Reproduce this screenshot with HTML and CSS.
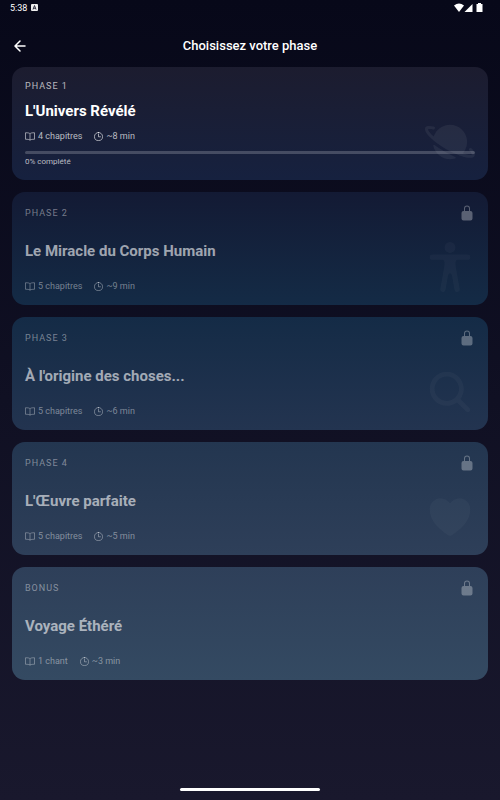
FILE: index.html
```html
<!DOCTYPE html>
<html lang="fr">
<head>
<meta charset="utf-8">
<meta name="viewport" content="width=device-width, initial-scale=1">
<title>Choisissez votre phase</title>
<link rel="stylesheet" href="styles.css">
</head>
<body>
<svg class="sprite" aria-hidden="true">
  <symbol id="book" viewBox="1 0 20 18"><path d="M11 3.500C9.500 1.800 7 1.500 2 1.500v13C7 14.500 9.500 15 11 16.500c1.500-1.500 4-2 9-2v-13C15 1.500 12.500 1.800 11 3.500zv13" fill="none" stroke="currentColor" stroke-width="1.500" stroke-linejoin="round"/></symbol>
  <symbol id="clock" viewBox="1 1 16 16"><path d="M9 1.800a7.200 7.200 0 1 0 0 14.400a7.200 7.200 0 1 0 0-14.400zM9 4.500v5h3.500" fill="none" stroke="currentColor" stroke-width="1.500" stroke-linecap="round" stroke-linejoin="round"/></symbol>
  <symbol id="lock" viewBox="0 0 512 512"><path fill="currentColor" d="M368 192h-16v-80a96 96 0 10-192 0v80h-16a64.070 64.070 0 00-64 64v176a64.070 64.070 0 0064 64h224a64.070 64.070 0 0064-64V256a64.070 64.070 0 00-64-64zm-48 0H192v-80a64 64 0 11128 0z"/></symbol>
</svg>

<div class="status">
  <span class="status-left">5:38
    <svg width="7" height="7" viewBox="0 0 14 14"><rect width="14" height="14" rx="2" fill="#eee"/><path d="M4 11l3-8 3 8M5 8.500h4" fill="none" stroke="#0a0a1e" stroke-width="1.600"/></svg>
  </span>
  <svg width="30" height="10" viewBox="0 0 30 10" fill="#fff"><path d="M0 2.500Q5-1.500 10 2.500L5 9z"/><path d="M18.500 1v8h-8z"/><path d="M24 0h3v1h1.500v8h-6V1H24z"/></svg>
</div>

<header class="header">
  <button class="back" type="button" aria-label="Retour">
    <svg width="12" height="12" viewBox="0 0 12 12"><path d="M6 1L1 6l5 5M1.500 6H11" fill="none" stroke="currentColor" stroke-width="1.500" stroke-linecap="round" stroke-linejoin="round"/></svg>
  </button>
  <h1>Choisissez votre phase</h1>
</header>

<main class="phases">
  <button class="card univers" type="button">
    <span class="top"><span class="label">PHASE 1</span></span>
    <span class="title">L'Univers Révélé</span>
    <span class="meta"><span class="item"><svg class="book"><use href="#book"/></svg>4 chapitres</span><span class="item"><svg class="clock"><use href="#clock"/></svg>~8 min</span></span>
    <span class="progress"><progress value="0" max="100" aria-label="Progression"></progress><span class="percent">0% complété</span></span>
    <svg class="art" viewBox="0 0 512 512"><path d="M96.850 286.620a8 8 0 00-12.530 8.250C102.070 373.280 172.300 432 256 432a175.310 175.310 0 0052.410-8 8 8 0 00.79-15 1120.560 1120.560 0 01-109.480-55.610 1126.240 1126.240 0 01-102.870-66.770z"/><path d="M492.720 339.510c-4.190-5.580-9.110-11.440-14.700-17.530a15.830 15.830 0 00-26.560 5.130l-.17.47a15.750 15.750 0 003.150 16.060c22.740 25 26.420 38.510 25.480 41.360-2 2.230-17.050 6.890-58.150-3.530q-8.830-2.240-19.320-5.460-6.760-2.080-13.790-4.490a176.760 176.760 0 0019.540-27.250l.52-.88A175.390 175.390 0 00432 256a178.870 178.870 0 00-1-19c-9.630-88.650-84.650-157-175-157a175.370 175.370 0 00-106.400 35.890 177.400 177.400 0 00-45.830 51.840l-.51.87a175.480 175.480 0 00-13.830 30.520q-5.590-4.870-10.790-9.670c-5.390-5-10.170-9.630-14.420-14-29.570-30.260-33.090-45.610-32.160-48.450 2.340-2.470 16.050-6.270 51.210 1.770a16 16 0 0015-5 15.800 15.800 0 00-8-26C63 91 16 84 4 106c-8 14-4 39 15.300 66.500C34 192 55 213 82 236C115 265 158 296 208 325C258 354 308 377 352 393C385 405 415 413 441 417C490 424 505 405 508 396C512 382 508 360 492.720 339.510z"/></svg>
  </button>

  <button class="card locked corps" type="button" disabled>
    <span class="top"><span class="label">PHASE 2</span><svg class="lock"><use href="#lock"/></svg></span>
    <span class="title">Le Miracle du Corps Humain</span>
    <span class="meta"><span class="item"><svg class="book"><use href="#book"/></svg>5 chapitres</span><span class="item"><svg class="clock"><use href="#clock"/></svg>~9 min</span></span>
    <svg class="art" viewBox="0 0 512 512"><circle cx="256" cy="56" r="56"/><path d="M437 128H75a27 27 0 000 54h101.880c6.910 0 15 3.090 19.580 15 5.350 13.830 2.730 40.540-.57 61.230l-4.320 24.450-34.720 197.160A27.430 27.430 0 00179 511.580a27.060 27.060 0 0031.420-22.290l23.910-136.800S242 320 256 320c14.230 0 21.740 32.490 21.740 32.490l23.920 136.920a27.240 27.240 0 1053.620-9.600L320.660 283l-4.440-24.800c-3.300-20.690-5.920-47.400-.57-61.230 4.560-11.880 12.910-15 19.260-15H437a27 27 0 000-54z"/></svg>
  </button>

  <button class="card locked origine" type="button" disabled>
    <span class="top"><span class="label">PHASE 3</span><svg class="lock"><use href="#lock"/></svg></span>
    <span class="title">À l'origine des choses...</span>
    <span class="meta"><span class="item"><svg class="book"><use href="#book"/></svg>5 chapitres</span><span class="item"><svg class="clock"><use href="#clock"/></svg>~6 min</span></span>
    <svg class="art" viewBox="0 0 512 512"><path d="M456.690 421.390L362.600 327.300a173.810 173.810 0 0034.840-104.580C397.440 126.380 319.060 48 222.720 48S48 126.380 48 222.720s78.380 174.720 174.720 174.720A173.810 173.810 0 00327.300 362.600l94.090 94.090a25 25 0 0035.300-35.300zM97.920 222.720a124.800 124.800 0 11124.800 124.800 124.950 124.950 0 01-124.800-124.800z"/></svg>
  </button>

  <button class="card locked oeuvre" type="button" disabled>
    <span class="top"><span class="label">PHASE 4</span><svg class="lock"><use href="#lock"/></svg></span>
    <span class="title">L'Œuvre parfaite</span>
    <span class="meta"><span class="item"><svg class="book"><use href="#book"/></svg>5 chapitres</span><span class="item"><svg class="clock"><use href="#clock"/></svg>~5 min</span></span>
    <svg class="art" viewBox="0 0 512 512"><path d="M256 448a32 32 0 01-18-5.570c-78.590-53.350-112.620-89.930-131.390-112.800-40-48.750-59.150-98.800-58.610-153C48.630 114.520 98.460 64 159.080 64c44.080 0 74.610 24.830 92.390 45.510a6 6 0 009.060 0C278.310 88.810 308.840 64 352.920 64c60.620 0 110.450 50.520 111.080 112.640.54 54.210-18.630 104.260-58.610 153-18.770 22.870-52.800 59.450-131.390 112.800A32 32 0 01256 448z"/></svg>
  </button>

  <button class="card locked voyage" type="button" disabled>
    <span class="top"><span class="label">BONUS</span><svg class="lock"><use href="#lock"/></svg></span>
    <span class="title">Voyage Éthéré</span>
    <span class="meta"><span class="item"><svg class="book"><use href="#book"/></svg>1 chant</span><span class="item"><svg class="clock"><use href="#clock"/></svg>~3 min</span></span>
  </button>
</main>

<div class="home"></div>
</body>
</html>
```
FILE: styles.css
```css
* { box-sizing: border-box; }

body {
  margin: 0;
  min-height: 100vh;
  display: flex;
  flex-direction: column;
  background: linear-gradient(#070819, #19182d);
  color: #fff;
  font-family: Roboto, "Liberation Sans", sans-serif;
}

button {
  border: 0;
  background: none;
  color: inherit;
  font: inherit;
  text-align: left;
}

svg { display: block; flex: none; }

.sprite { position: absolute; width: 0; height: 0; }

.status {
  display: flex;
  align-items: center;
  justify-content: space-between;
  height: 15px;
  padding: 0 16px 0 10px;
  font-size: 9px;
  line-height: 12px;
}

.status-left { display: flex; align-items: center; gap: 4px; }

.header {
  display: grid;
  grid-template-columns: 16px 1fr 16px;
  align-items: center;
  margin-top: 21px;
  padding: 0 12px;
  height: 20px;
}

.back { padding: 2px; }

h1 {
  margin: 0;
  text-align: center;
  font-size: 13px;
  line-height: 20px;
  font-weight: 500;
}

.phases {
  display: flex;
  flex-direction: column;
  gap: 12px;
  padding: 11px 12px;
}

.card {
  position: relative;
  display: flex;
  flex-direction: column;
  justify-content: space-between;
  min-height: 113px;
  padding: 13px;
  border-radius: 13px;
}

.univers { background: linear-gradient(#1c1c2f, #16213f); }
.corps { background: linear-gradient(#131a34, #142b46); }
.origine { background: linear-gradient(#142b46, #233450); }
.oeuvre { background: linear-gradient(#233650, #2e3f59); }
.voyage { background: linear-gradient(#2e3f59, #344a62); }

.top { display: flex; justify-content: space-between; align-items: center; }

.label {
  font-size: 9px;
  line-height: 12px;
  letter-spacing: 1px;
  color: rgba(255, 255, 255, 0.7);
}

.lock { width: 16px; height: 16px; color: rgba(255, 255, 255, 0.3); }

.title { font-size: 15px; line-height: 20px; font-weight: 700; }

.meta {
  display: flex;
  gap: 12px;
  font-size: 9px;
  line-height: 12px;
  color: rgba(255, 255, 255, 0.7);
}

.item { display: flex; align-items: center; gap: 3px; }
.book { width: 10px; height: 9px; }
.clock { width: 9px; height: 9px; }

.locked .label, .locked .meta { color: rgba(255, 255, 255, 0.42); }
.locked .title { color: rgba(255, 255, 255, 0.6); }

.progress { display: flex; flex-direction: column; gap: 3px; }

progress {
  appearance: none;
  display: block;
  width: 100%;
  height: 3px;
  border: 0;
  border-radius: 2px;
  overflow: hidden;
  background: rgba(255, 255, 255, 0.2);
}

progress::-webkit-progress-bar { background: transparent; }
progress::-webkit-progress-value { background: #fff; }

.percent { font-size: 8px; line-height: 10px; color: rgba(255, 255, 255, 0.7); }

.art {
  position: absolute;
  right: 13px;
  bottom: 13px;
  width: 50px;
  height: 50px;
  fill: rgba(255, 255, 255, 0.06);
}

.locked .art { fill: rgba(255, 255, 255, 0.03); }

.home {
  width: 28%;
  height: 3px;
  margin: auto auto 9px;
  border-radius: 2px;
  background: #fff;
}
```
